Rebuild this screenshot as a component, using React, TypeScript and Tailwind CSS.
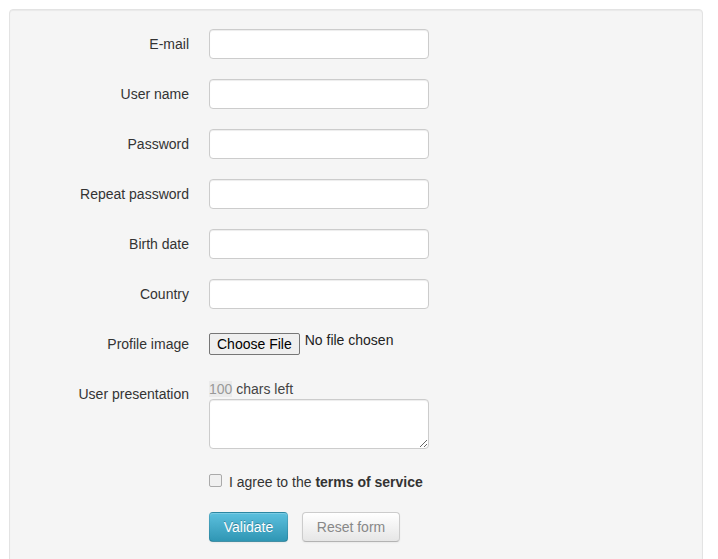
import React from 'react';

const fields = ['E-mail', 'User name', 'Password', 'Repeat password', 'Birth date', 'Country'];

function Label({ children }: { children: React.ReactNode }) {
  return <div className="w-[160px] shrink-0 pt-[5px] text-right leading-[20px]">{children}</div>;
}

export default function App() {
  return (
    <div className="min-h-[559px] bg-white pl-[9px] pt-[9px] text-[14px] text-[#333]" style={{ fontFamily: '"Liberation Sans", Arial, sans-serif' }}>
      <div className="h-[560px] w-[694px] rounded-[4px] border border-[#e3e3e3] bg-[#f5f5f5] p-[19px] shadow-[inset_0_1px_1px_rgba(0,0,0,0.05)]">
        <div className="flex flex-col gap-[20px]">
          {fields.map((f) => (
            <div key={f} className="flex gap-[20px]">
              <Label>{f}</Label>
              <input
                type={f.includes('assword') ? 'password' : 'text'}
                className="h-[30px] w-[220px] rounded-[4px] border border-[#ccc] bg-white px-[6px] shadow-[inset_0_1px_1px_rgba(0,0,0,0.075)] outline-none"
              />
            </div>
          ))}
          <div className="flex h-[30px] gap-[20px]">
            <Label>Profile image</Label>
            <div className="flex items-start">
              <div className="mt-[4px] flex h-[22px] items-center rounded-[2px] border border-[#767676] bg-[#efefef] px-[7px] text-[14px] text-black">
                Choose File
              </div>
              <span className="ml-[5px] mt-[1px] leading-[20px] text-[#222]">No file chosen</span>
            </div>
          </div>
          <div className="flex gap-[20px]">
            <Label>User presentation</Label>
            <div className="flex flex-col">
              <div className="leading-[20px] text-[#444]">
                <span className="bg-[#ebebeb] text-[#999]">100</span> chars left
              </div>
              <textarea className="h-[50px] w-[220px] resize-y rounded-[4px] border border-[#ccc] bg-white px-[6px] shadow-[inset_0_1px_1px_rgba(0,0,0,0.075)] outline-none" />
            </div>
          </div>
        </div>
        <div className="ml-[180px] mt-[23px] flex h-[20px] items-center">
          <span className="-mt-[3px] inline-block h-[13px] w-[13px] rounded-[2px] border border-[#aaa] bg-[#f0f0f0]" />
          <span className="ml-[7px]">
            I agree to the <b className="font-bold">terms of service</b>
          </span>
        </div>
        <div className="ml-[180px] mt-[20px] flex gap-[14px]">
          <button className="h-[30px] w-[79px] rounded-[4px] border border-[rgba(0,0,0,0.1)] border-b-[rgba(0,0,0,0.25)] bg-gradient-to-b from-[#5bc0de] to-[#2f96b4] text-white [text-shadow:0_-1px_0_rgba(0,0,0,0.25)] shadow-[inset_0_1px_0_rgba(255,255,255,0.2),0_1px_2px_rgba(0,0,0,0.05)]">
            Validate
          </button>
          <button className="h-[30px] w-[98px] rounded-[4px] border border-[#ccc] border-b-[#b3b3b3] bg-gradient-to-b from-white to-[#e6e6e6] text-[#888] shadow-[0_1px_2px_rgba(0,0,0,0.05)]">
            Reset form
          </button>
        </div>
      </div>
    </div>
  );
}
